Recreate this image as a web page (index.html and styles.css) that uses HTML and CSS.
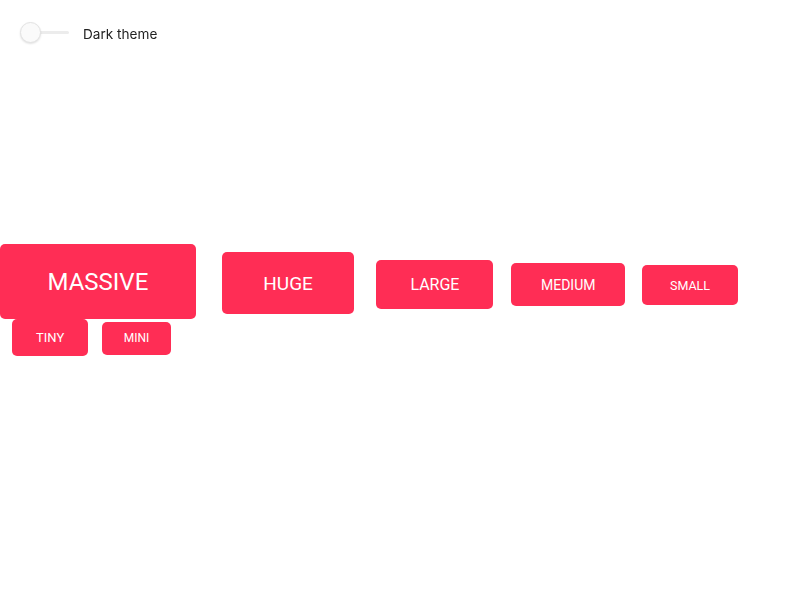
FILE: index.html
```html
<!DOCTYPE html>
<html>
<head>
<meta charset="utf-8">
<link rel="stylesheet" href="styles.css">
</head>
<body>
<label class="theme-toggle">
  <span class="switch"><span class="track"></span><span class="knob"></span></span>
  <span class="toggle-label">Dark theme</span>
</label>
<main class="stage">
  <div class="buttons">
    <button class="btn massive">MASSIVE</button>
    <button class="btn huge">HUGE</button>
    <button class="btn large">LARGE</button>
    <button class="btn medium">MEDIUM</button>
    <button class="btn small">SMALL</button>
    <button class="btn tiny">TINY</button>
    <button class="btn mini">MINI</button>
  </div>
</main>
</body>
</html>
```
FILE: styles.css
```css
html, body {
  margin: 0;
  padding: 0;
  background: #fff;
  font-family: Roboto, "Liberation Sans", sans-serif;
}

.theme-toggle {
  position: fixed;
  top: 22px;
  left: 20px;
  display: flex;
  align-items: center;
  gap: 14px;
}

.switch {
  position: relative;
  display: block;
  width: 49px;
  height: 21px;
}

.track {
  position: absolute;
  left: 10px;
  right: 0;
  top: 9px;
  height: 3px;
  background: #ececec;
  border-radius: 2px;
}

.knob {
  position: absolute;
  left: 0;
  top: 0;
  width: 19px;
  height: 19px;
  border-radius: 50%;
  background: #fafafa;
  border: 1px solid #e2e2e2;
  box-shadow: 0 1px 2px rgba(0,0,0,0.12);
}

.toggle-label {
  font-family: Inter, Roboto, sans-serif;
  font-size: 13.6px;
  color: #222;
  padding-top: 2px;
}

.stage {
  min-height: 100vh;
  display: flex;
  align-items: center;
}

.buttons {
  display: flex;
  flex-wrap: wrap;
  align-items: baseline;
  width: 760px;
}

.btn {
  display: inline-flex;
  align-items: center;
  justify-content: center;
  border: none;
  border-radius: 5px;
  background: #ff2d55;
  color: #fff;
  font-family: Roboto, "Liberation Sans", sans-serif;
  padding: 0;
  box-sizing: border-box;
}

.massive { font-size: 24px; height: 75px; padding: 0 47.5px; margin-right: 26px; }
.huge    { font-size: 19px; height: 62px; padding: 0 41.5px; margin-right: 22px; }
.large   { font-size: 16px; height: 49px; padding: 0 34px; margin-right: 18px; }
.medium  { font-size: 14px; height: 43px; padding: 0 29.5px; margin-right: 17px; }
.small   { font-size: 12.5px; height: 40px; padding: 0 28px; }
.tiny    { font-size: 13px; height: 37px; padding: 0 24px; margin-left: 12px; margin-right: 14px; }
.mini    { font-size: 12px; height: 33px; padding: 0 21.5px; }
```
